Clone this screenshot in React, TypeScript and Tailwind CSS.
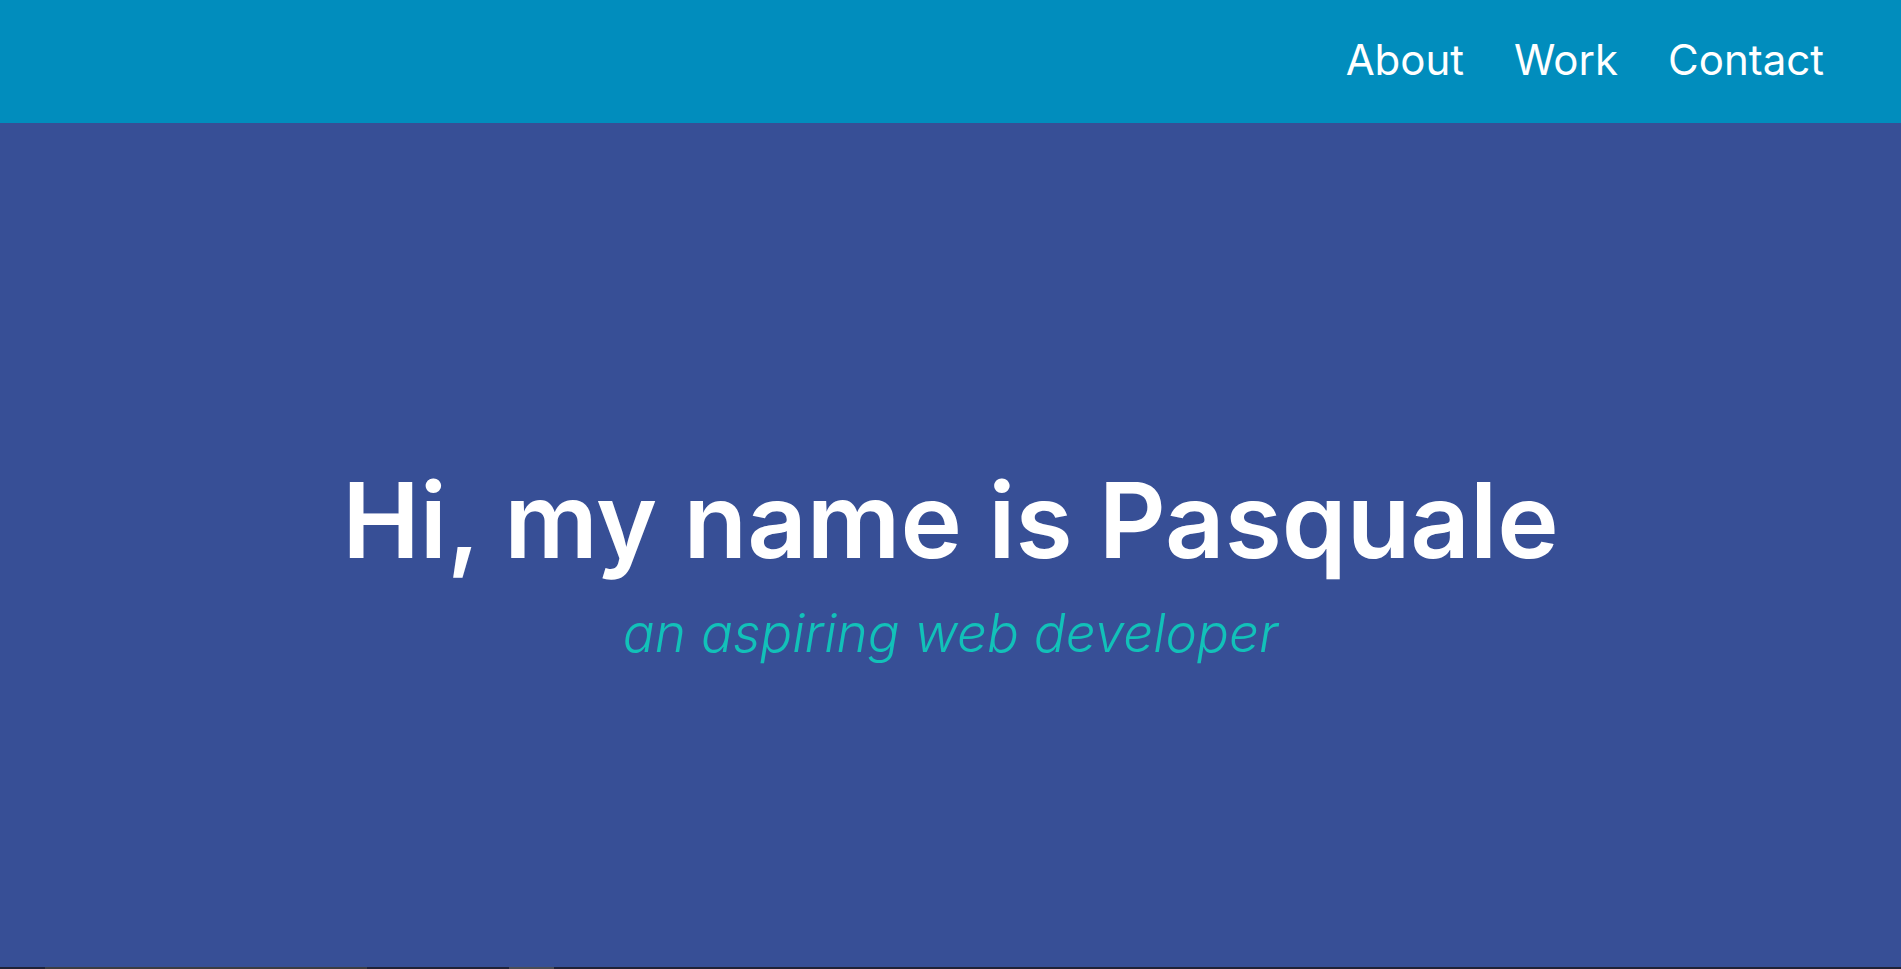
import React from "react";

export default function App() {
  const font = { fontFamily: "Inter, 'Noto Sans', sans-serif" };
  return (
    <div className="w-[1901px] h-[969px] flex flex-col overflow-hidden" style={font}>
      <header className="h-[123px] bg-[#018dbd] flex items-center justify-end pr-[77px] pb-[4px]">
        <nav className="flex gap-[50px] text-white text-[42px] font-normal leading-none">
          <a href="#about">About</a>
          <a href="#work">Work</a>
          <a href="#contact">Contact</a>
        </nav>
      </header>
      <main className="h-[844px] bg-[#374f96] flex flex-col items-center pt-[335px]">
        <h1 className="text-white text-[104px] font-semibold leading-[1.2]">Hi, my name is Pasquale</h1>
        <p className="text-[#12c1b9] text-[53px] font-light italic leading-[1.2] mt-[19px]">an aspiring web developer</p>
      </main>
      <div className="h-[2px] bg-[#1f2236] flex">
        <div className="w-[45px]" />
        <div className="w-[322px] bg-[#3b3d42]" />
        <div className="w-[142px]" />
        <div className="w-[45px] bg-[#4a4d56]" />
      </div>
    </div>
  );
}
